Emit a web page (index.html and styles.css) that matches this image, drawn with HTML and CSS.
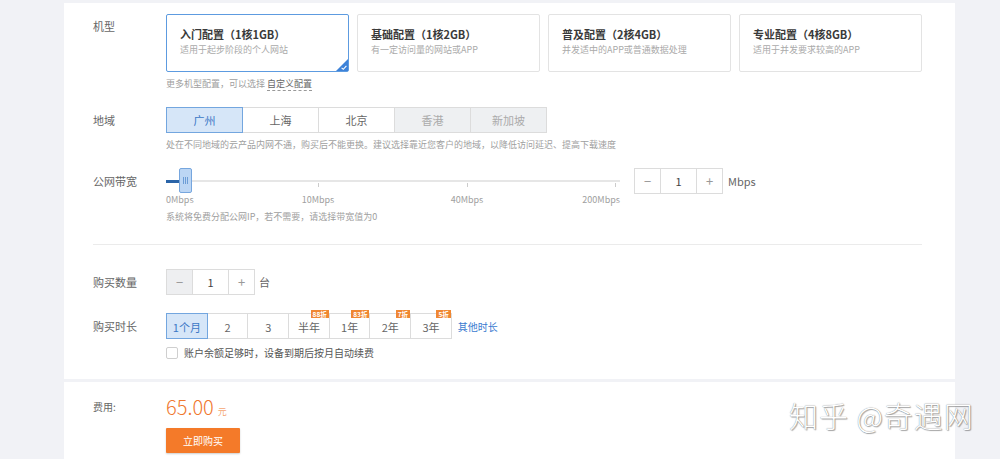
FILE: index.html
```html
<!DOCTYPE html>
<html lang="zh-CN">
<head>
<meta charset="utf-8">
<title>购买云服务器</title>
<link rel="stylesheet" href="styles.css">
</head>
<body>
<div class="page">
  <section class="panel main">
    <div class="row row-model">
      <div class="label">机型</div>
      <div class="field">
        <div class="cards">
          <div class="card selected">
            <div class="card-title">入门配置（1核1GB）</div>
            <div class="card-sub">适用于起步阶段的个人网站</div>
            <svg class="card-check" viewBox="0 0 12 12" width="12" height="12"><path d="M12 0L12 12L0 12Z" fill="#3d82d8"/><path d="M5.6 8.8L7.3 10.3L10.4 6.9" fill="none" stroke="#fff" stroke-width="1.1"/></svg>
          </div>
          <div class="card">
            <div class="card-title">基础配置（1核2GB）</div>
            <div class="card-sub">有一定访问量的网站或APP</div>
          </div>
          <div class="card">
            <div class="card-title">普及配置（2核4GB）</div>
            <div class="card-sub">并发适中的APP或普通数据处理</div>
          </div>
          <div class="card">
            <div class="card-title">专业配置（4核8GB）</div>
            <div class="card-sub">适用于并发要求较高的APP</div>
          </div>
        </div>
        <div class="note">更多机型配置，可以选择 <span class="dashed">自定义配置</span></div>
      </div>
    </div>

    <div class="row row-region">
      <div class="label">地域</div>
      <div class="field">
        <div class="seg region">
          <div class="seg-btn active">广州</div>
          <div class="seg-btn">上海</div>
          <div class="seg-btn">北京</div>
          <div class="seg-btn disabled">香港</div>
          <div class="seg-btn disabled">新加坡</div>
        </div>
        <div class="note">处在不同地域的云产品内网不通，购买后不能更换。建议选择靠近您客户的地域，以降低访问延迟、提高下载速度</div>
      </div>
    </div>

    <div class="row row-bw">
      <div class="label">公网带宽</div>
      <div class="field">
        <div class="bw">
          <div class="slider">
            <div class="track"></div>
            <div class="fill"></div>
            <span class="tick t10"></span>
            <span class="tick t40"></span>
            <span class="tick t200"></span>
            <div class="handle">
              <svg viewBox="0 0 5 7" width="5" height="7"><path d="M0.5 0V7M2.5 0V7M4.5 0V7" stroke="#6c9dd6" stroke-width="1"/></svg>
            </div>
            <span class="tick-label l0">0Mbps</span>
            <span class="tick-label l10">10Mbps</span>
            <span class="tick-label l40">40Mbps</span>
            <span class="tick-label l200">200Mbps</span>
          </div>
          <div class="stepper">
            <div class="step-btn minus">−</div>
            <div class="step-val">1</div>
            <div class="step-btn plus">+</div>
          </div>
          <span class="unit">Mbps</span>
        </div>
        <div class="note bw-note">系统将免费分配公网IP，若不需要，请选择带宽值为0</div>
      </div>
    </div>

    <div class="divider"></div>

    <div class="row row-qty">
      <div class="label">购买数量</div>
      <div class="field inline">
        <div class="stepper qty">
          <div class="step-btn minus disabled">−</div>
          <div class="step-val">1</div>
          <div class="step-btn plus">+</div>
        </div>
        <span class="unit">台</span>
      </div>
    </div>

    <div class="row row-dur">
      <div class="label">购买时长</div>
      <div class="field inline">
        <div class="seg dur">
          <div class="seg-btn active"><span class="txt">1个月</span></div>
          <div class="seg-btn"><span class="txt">2</span></div>
          <div class="seg-btn"><span class="txt">3</span></div>
          <div class="seg-btn"><span class="txt">半年</span><span class="badge">88折</span></div>
          <div class="seg-btn"><span class="txt">1年</span><span class="badge">83折</span></div>
          <div class="seg-btn"><span class="txt">2年</span><span class="badge">7折</span></div>
          <div class="seg-btn"><span class="txt">3年</span><span class="badge">5折</span></div>
        </div>
        <a class="more">其他时长</a>
      </div>
    </div>

    <div class="row row-check">
      <div class="label"></div>
      <div class="field inline">
        <span class="checkbox"></span>
        <span class="check-text">账户余额足够时，设备到期后按月自动续费</span>
      </div>
    </div>
  </section>

  <section class="panel footer">
    <div class="row">
      <div class="label price-label">费用:</div>
      <div class="field">
        <div class="price">65.00<span class="yuan">元</span></div>
        <button class="buy">立即购买</button>
      </div>
    </div>
  </section>
</div>
<div class="watermark">知乎 @奇遇网</div>
</body>
</html>
```

FILE: styles.css
```css
* { box-sizing: border-box; }
html, body { margin: 0; padding: 0; }
body {
  background: #f1f2f6;
  font-family: "Noto Sans CJK SC", "Noto Sans", sans-serif;
  font-size: 11px;
  color: #555;
  height: 459px;
  overflow: hidden;
  position: relative;
}
.page {
  width: 891px;
  margin-left: 64px;
  padding-top: 3px;
}
.panel {
  background: #fff;
  padding-left: 29px;
  padding-right: 33px;
}
.main {
  padding-top: 11px;
  padding-bottom: 20px;
}
.row { display: flex; }
.label {
  width: 73px;
  flex: none;
  line-height: 26px;
  color: #666;
  font-size: 11px;
}
.field { flex: 1; min-width: 0; }
.field.inline { display: flex; align-items: center; }
.row-model .label { line-height: 24px; }

/* cards */
.cards { display: flex; gap: 8px; }
.card {
  position: relative;
  width: 183px;
  height: 58px;
  border: 1px solid #e3e3e3;
  border-radius: 2px;
  padding: 12px 13px 0;
}
.card.selected { border-color: #5d9be0; }
.card-title {
  font-size: 11px;
  line-height: 14px;
  color: #3a3a3a;
  font-weight: 600;
}
.card-sub {
  font-size: 9px;
  line-height: 12px;
  color: #aaa;
  margin-top: 3px;
}
.card-check {
  position: absolute;
  right: 0;
  bottom: 0;
  display: block;
}
.note {
  font-size: 9px;
  line-height: 12px;
  color: #a0a0a0;
  margin-top: 6px;
  white-space: nowrap;
}
.dashed {
  color: #666;
  border-bottom: 1px dashed #999;
}

/* segmented buttons */
.row-region { margin-top: 17px; }
.seg { display: flex; }
.seg-btn {
  position: relative;
  height: 26px;
  line-height: 24px;
  text-align: center;
  border: 1px solid #dcdcdc;
  border-left: none;
  background: #fff;
  color: #666;
  font-size: 11px;
}
.seg-btn:first-child { border-left: 1px solid #dcdcdc; }
.seg-btn.active {
  background: #d6e6f8;
  border-color: #73a6df;
  color: #3b78c6;
}
.seg-btn.disabled {
  background: #eef0f2;
  color: #aaa;
}
.region .seg-btn { width: 76px; }
.region .seg-btn:first-child { width: 77px; }

/* bandwidth */
.row-bw { margin-top: 17px; }
.bw { display: flex; align-items: flex-start; }
.slider {
  position: relative;
  width: 454px;
  height: 37px;
  flex: none;
}
.track {
  position: absolute;
  left: 0;
  right: 0;
  top: 12px;
  height: 2px;
  background: #e6e6e6;
}
.fill {
  position: absolute;
  left: 0;
  width: 14px;
  top: 12px;
  height: 3px;
  background: #2a64a8;
}
.handle {
  position: absolute;
  left: 13px;
  top: 0;
  width: 13px;
  height: 25px;
  background: #bcd6f4;
  border: 1px solid #76a6de;
  border-radius: 2px;
  display: flex;
  align-items: center;
  justify-content: center;
}
.handle svg { display: block; }
.tick {
  position: absolute;
  top: 15px;
  width: 1px;
  height: 4px;
  background: #ccc;
}
.t10 { left: 152px; }
.t40 { left: 301px; }
.t200 { left: 449px; }
.tick-label {
  position: absolute;
  top: 26px;
  font-size: 9px;
  line-height: 12px;
  color: #a0a0a0;
  white-space: nowrap;
}
.l0 { left: 0; }
.l10 { left: 152px; transform: translateX(-50%); }
.l40 { left: 301px; transform: translateX(-50%); }
.l200 { right: 0; }
.bw .stepper { margin-left: 14px; }

/* stepper */
.stepper {
  display: flex;
  height: 26px;
  border: 1px solid #dcdcdc;
  flex: none;
}
.step-btn {
  width: 25px;
  text-align: center;
  line-height: 24px;
  color: #999;
  font-size: 13px;
}
.step-btn.disabled { background: #eeeff1; }
.step-val {
  width: 37px;
  text-align: center;
  line-height: 24px;
  color: #444;
  font-size: 11px;
  border-left: 1px solid #dcdcdc;
  border-right: 1px solid #dcdcdc;
}
.unit {
  margin-left: 5px;
  line-height: 26px;
  color: #666;
  font-size: 11px;
}
.bw-note { margin-top: 6px; }

.divider {
  margin-top: 21px;
  height: 1px;
  background: #ebebeb;
}

.row-qty { margin-top: 24px; }
.row-qty .unit { margin-left: 4px; }

/* duration */
.row-dur { margin-top: 18px; }
.dur .seg-btn {
  width: 40.7px;
  display: flex;
  align-items: center;
  justify-content: center;
  padding-top: 3px;
}
.dur .seg-btn:first-child { width: 41.7px; }
.dur .txt { line-height: 11px; }
.badge {
  position: absolute;
  top: -4px;
  right: 0;
  height: 8px;
  padding: 0 2px;
  background: #f08732;
  color: #fff;
  font-size: 6.5px;
  line-height: 8px;
  font-weight: 700;
  white-space: nowrap;
}
.more {
  margin-left: 6px;
  color: #3b7bd0;
  font-size: 10px;
}

/* checkbox */
.row-check { margin-top: 8px; }
.row-check .label { line-height: 12px; }
.checkbox {
  width: 12px;
  height: 12px;
  border: 1px solid #cfcfcf;
  border-radius: 2px;
  background: #fff;
}
.check-text {
  margin-left: 6px;
  font-size: 10px;
  line-height: 12px;
  color: #555;
}

/* footer */
.footer {
  margin-top: 3px;
  padding-top: 14px;
  height: 90px;
}
.price-label {
  line-height: 22px;
  font-size: 10px;
}
.price {
  color: #f0782f;
  font-size: 20px;
  line-height: 22px;
  font-weight: 300;
}
.yuan {
  font-size: 9px;
  margin-left: 4px;
}
.buy {
  display: block;
  margin-top: 5px;
  width: 74px;
  height: 25px;
  background: #f47a29;
  color: #fff;
  font-family: inherit;
  font-size: 10px;
  border: none;
  border-radius: 1px;
  box-shadow: 0 1px 2px rgba(0, 0, 0, 0.2);
  padding: 0;
}

.watermark {
  position: absolute;
  left: 789px;
  top: 397px;
  font-size: 29px;
  line-height: 36px;
  letter-spacing: 1px;
  color: #fff;
  font-weight: 300;
  white-space: nowrap;
  text-shadow: 0 0 1px #777, 1px 1px 1px rgba(0, 0, 0, 0.35);
}
```
